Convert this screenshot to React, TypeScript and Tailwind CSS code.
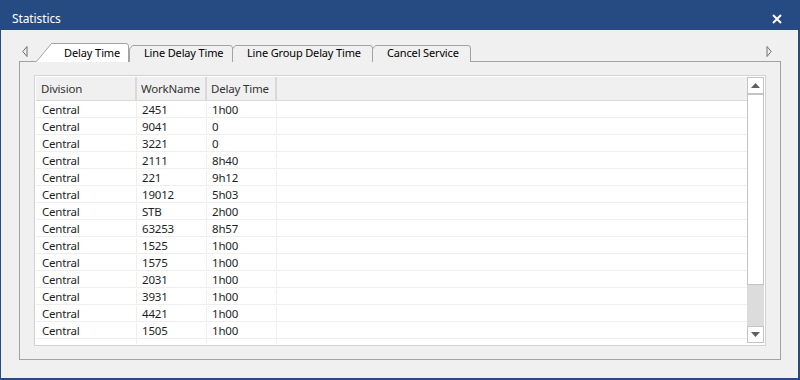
import React from "react";

const rows: [string, string, string][] = [
  ["Central", "2451", "1h00"],
  ["Central", "9041", "0"],
  ["Central", "3221", "0"],
  ["Central", "2111", "8h40"],
  ["Central", "221", "9h12"],
  ["Central", "19012", "5h03"],
  ["Central", "STB", "2h00"],
  ["Central", "63253", "8h57"],
  ["Central", "1525", "1h00"],
  ["Central", "1575", "1h00"],
  ["Central", "2031", "1h00"],
  ["Central", "3931", "1h00"],
  ["Central", "4421", "1h00"],
  ["Central", "1505", "1h00"],
];

const font = { fontFamily: '"Noto Sans", "Segoe UI", sans-serif' };

function ActiveTab({ label }: { label: string }) {
  return (
    <div className="relative z-10 h-[19px] w-[93px] shrink-0">
      <svg className="absolute inset-0" width="93" height="19" viewBox="0 0 93 19">
        <path d="M0.5 18.5 L15.5 0.5 L90 0.5 Q92.5 0.5 92.5 3 L92.5 19 L0 19 Z" fill="#ffffff" />
        <path d="M0.5 18.5 L15.5 0.5 L90 0.5 Q92.5 0.5 92.5 3 L92.5 19" fill="none" stroke="#a3a3a3" />
      </svg>
      <span className="relative block pl-[28px] pt-[1px] text-[11px] leading-[17px] tracking-[-0.1px] text-black">{label}</span>
    </div>
  );
}

function Tab({ label, width }: { label: string; width: number }) {
  return (
    <div className="relative -ml-px mt-[2px] h-[16px] shrink-0" style={{ width }}>
      <svg className="absolute inset-0" width={width} height="17" viewBox={`0 0 ${width} 17`}>
        <path
          d={`M0.5 17 L0.5 4 L3.5 0.5 L${width - 3} 0.5 Q${width - 0.5} 0.5 ${width - 0.5} 3 L${width - 0.5} 17`}
          fill="#f0f0f0"
          stroke="#a3a3a3"
        />
      </svg>
      <span className="relative block whitespace-nowrap pl-[15px] text-[11px] leading-[15px] tracking-[-0.15px] text-black">{label}</span>
    </div>
  );
}

function ScrollButton({ down }: { down?: boolean }) {
  return (
    <div className="flex h-[17px] items-center justify-center border border-[#c4c4c4] bg-white">
      <svg width="9" height="5" viewBox="0 0 9 5">
        <path d={down ? "M0 0 L9 0 L4.5 5 Z" : "M0 5 L9 5 L4.5 0 Z"} fill="#606060" />
      </svg>
    </div>
  );
}

export default function App() {
  return (
    <div className="flex h-[380px] w-[800px] flex-col bg-[#264a82] pb-[2px] pl-px pr-[2px]" style={font}>
      <div className="flex h-[30px] shrink-0 items-center justify-between pl-[11px] pr-[16px] pt-[7px] text-white">
        <span className="text-[12px] tracking-[-0.1px]">Statistics</span>
        <svg width="10" height="10" viewBox="0 0 10 10">
          <path d="M1 1 L9 9 M9 1 L1 9" stroke="#ffffff" strokeWidth="2" />
        </svg>
      </div>

      <div className="flex flex-1 flex-col bg-[#f0f0f0] pl-[18px] pr-[17px] pt-[13px]">
        <div className="relative -mb-px flex h-[19px] items-start pl-[17px]">
          <svg className="absolute left-[3px] top-[3px]" width="6" height="11" viewBox="0 0 6 11">
            <path d="M5 0.5 L5 10.5 L0.8 5.5 Z" fill="none" stroke="#6e6e6e" />
          </svg>
          <ActiveTab label="Delay Time" />
          <div className="ml-px" />
          <Tab label="Line Delay Time" width={104} />
          <Tab label="Line Group Delay Time" width={141} />
          <Tab label="Cancel Service" width={99} />
          <svg className="absolute right-[9px] top-[3px]" width="6" height="11" viewBox="0 0 6 11">
            <path d="M1 0.5 L1 10.5 L5.2 5.5 Z" fill="none" stroke="#6e6e6e" />
          </svg>
        </div>

        <div className="h-[299px] border border-[#a3a3a3] bg-[#f0f0f0] pb-[13px] pl-[14px] pr-[14px] pt-[13px]">
          <div className="flex h-full border border-[#d2d2d2] bg-white p-px">
            <div className="flex-1 overflow-hidden text-[11.5px] tracking-[-0.2px] text-[#1e1e1e]">
              <div className="flex h-[24px] border-b border-[#d9d9d9] bg-[#f0f0f0] text-[#333333]">
                <div className="flex w-[101px] items-center border-r-2 border-[#d9d9d9] pl-[5px]">Division</div>
                <div className="flex w-[70px] items-center border-r-2 border-[#d9d9d9] pl-[4px]">WorkName</div>
                <div className="flex w-[70px] items-center border-r-2 border-[#d9d9d9] pl-[4px]">Delay Time</div>
                <div className="flex-1" />
              </div>
              {rows.map(([d, w, t], i) => (
                <div key={i} className="flex h-[17px] border-b border-[#efefef] pt-px leading-[16px]">
                  <div className="w-[101px] border-r border-[#efefef] pl-[6px]">{d}</div>
                  <div className="w-[70px] border-r border-[#efefef] pl-[5px]">{w}</div>
                  <div className="w-[70px] border-r border-[#efefef] pl-[5px]">{t}</div>
                  <div className="flex-1" />
                </div>
              ))}
              <div className="flex h-[17px]">
                <div className="w-[101px] border-r border-[#efefef]" />
                <div className="w-[70px] border-r border-[#efefef]" />
                <div className="w-[70px] border-r border-[#efefef]" />
              </div>
            </div>
            <div className="flex w-[17px] flex-col pb-px">
              <ScrollButton />
              <div className="h-[191px] border border-[#c4c4c4] bg-white" />
              <div className="flex-1 bg-[#dcdcdc]" />
              <ScrollButton down />
            </div>
          </div>
        </div>
      </div>
    </div>
  );
}
